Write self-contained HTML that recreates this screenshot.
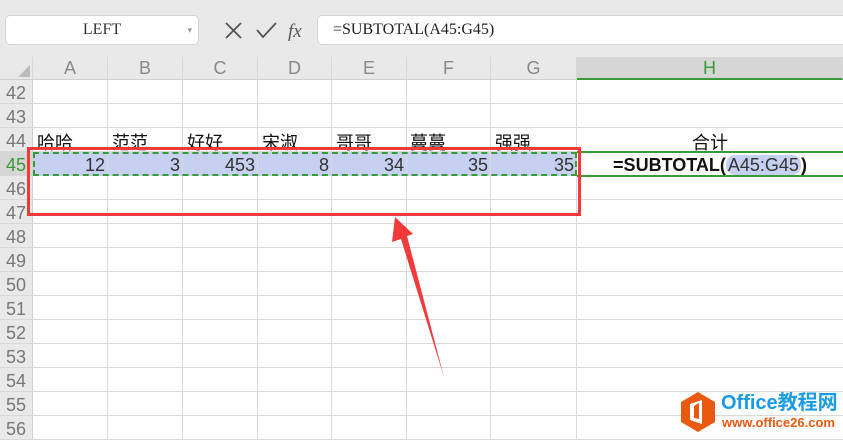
<!DOCTYPE html><html><head><meta charset="utf-8"><style>
*{margin:0;padding:0;box-sizing:border-box}
body{width:843px;height:440px;overflow:hidden;background:#fff;font-family:"Liberation Sans","Noto Sans CJK SC",sans-serif;position:relative}
.a{position:absolute;white-space:nowrap}
.top{left:0;top:0;width:843px;height:57px;background:#e9e9e9}
.nb{left:5px;top:15px;width:194px;height:30px;background:#fff;border:1px solid #d4d4d4;border-radius:5px;font-family:"Liberation Serif",serif;font-size:16px;text-align:center;line-height:28px;color:#333}
.fb{left:317px;top:15px;width:540px;height:30px;background:#fff;border:1px solid #d4d4d4;border-radius:5px;font-family:"Liberation Serif",serif;font-size:16px;line-height:28px;padding-left:15px;color:#222}
.hdr{top:57px;height:23px;background:#e9e9e9;border-bottom:1px solid #cfcfcf;border-right:1px solid #d8d8d8;color:#888;font-size:18px;text-align:center;line-height:23px}
.rn{left:0;width:33px;height:24px;background:#e9e9e9;border-bottom:1px solid #d8d8d8;border-right:1px solid #cfcfcf;color:#777;font-size:18px;text-align:center;line-height:26px}
.vl{top:80px;width:1px;height:360px;background:#dadada}
.hl{left:33px;width:810px;height:1px;background:#dadada}
.t{font-size:18px;color:#111;height:23px;overflow:hidden;line-height:30px}
.n{font-size:18px;color:#333;text-align:right;line-height:26px}
</style></head><body>
<div class="a top"></div>
<div class="a nb">LEFT<span style="position:absolute;right:6px;top:0;font-size:9px;color:#999">▾</span></div>
<svg class="a" style="left:222px;top:18px" width="100" height="26"><path d="M4 5l15 15M19 5L4 20" stroke="#555" stroke-width="1.8" fill="none"/><path d="M35 12l6 7 13-14" stroke="#555" stroke-width="1.8" fill="none"/><text x="66" y="19" font-family="Liberation Serif" font-style="italic" font-size="19" fill="#555">fx</text></svg>
<div class="a fb">=SUBTOTAL(A45:G45)</div>
<div class="a hdr" style="left:0;width:33px"><svg width="33" height="22"><path d="M30 20H18L30 8z" fill="#bbb"/></svg></div>
<div class="a hdr" style="left:33px;width:75px">A</div>
<div class="a hdr" style="left:108px;width:75px">B</div>
<div class="a hdr" style="left:183px;width:75px">C</div>
<div class="a hdr" style="left:258px;width:74px">D</div>
<div class="a hdr" style="left:332px;width:75px">E</div>
<div class="a hdr" style="left:407px;width:84px">F</div>
<div class="a hdr" style="left:491px;width:86px">G</div>
<div class="a hdr" style="left:577px;width:266px;background:#d6d6d6;color:#3a9a3a;border-bottom:2px solid #3a9a3a">H</div>
<div class="a rn" style="top:80px">42</div><div class="a rn" style="top:104px">43</div><div class="a rn" style="top:128px">44</div><div class="a rn" style="top:152px;color:#3a9a3a;background:#d6d6d6">45</div><div class="a rn" style="top:176px">46</div><div class="a rn" style="top:200px">47</div><div class="a rn" style="top:224px">48</div><div class="a rn" style="top:248px">49</div><div class="a rn" style="top:272px">50</div><div class="a rn" style="top:296px">51</div><div class="a rn" style="top:320px">52</div><div class="a rn" style="top:344px">53</div><div class="a rn" style="top:368px">54</div><div class="a rn" style="top:392px">55</div><div class="a rn" style="top:416px">56</div>
<div class="a hl" style="top:103px"></div><div class="a hl" style="top:127px"></div><div class="a hl" style="top:151px"></div><div class="a hl" style="top:175px"></div><div class="a hl" style="top:199px"></div><div class="a hl" style="top:223px"></div><div class="a hl" style="top:247px"></div><div class="a hl" style="top:271px"></div><div class="a hl" style="top:295px"></div><div class="a hl" style="top:319px"></div><div class="a hl" style="top:343px"></div><div class="a hl" style="top:367px"></div><div class="a hl" style="top:391px"></div><div class="a hl" style="top:415px"></div><div class="a hl" style="top:439px"></div>
<div class="a" style="left:33px;top:152px;width:544px;height:24px;background:#c6d0f0"></div>
<div class="a vl" style="left:107px"></div><div class="a vl" style="left:182px"></div><div class="a vl" style="left:257px"></div><div class="a vl" style="left:331px"></div><div class="a vl" style="left:406px"></div><div class="a vl" style="left:490px"></div><div class="a vl" style="left:576px"></div>
<div class="a" style="left:577px;top:151px;width:266px;height:2px;background:#3a9a3a"></div>
<div class="a" style="left:577px;top:175px;width:266px;height:2px;background:#3a9a3a"></div>
<div class="a t" style="left:37px;top:128px">哈哈</div><div class="a t" style="left:112px;top:128px">范范</div><div class="a t" style="left:187px;top:128px">好好</div><div class="a t" style="left:262px;top:128px">宋淑</div><div class="a t" style="left:336px;top:128px">哥哥</div><div class="a t" style="left:410px;top:128px">蔓蔓</div><div class="a t" style="left:495px;top:128px">强强</div>
<div class="a t" style="left:577px;width:266px;text-align:center;top:128px">合计</div>
<div class="a n" style="left:33px;width:72px;top:152px">12</div><div class="a n" style="left:108px;width:72px;top:152px">3</div><div class="a n" style="left:183px;width:72px;top:152px">453</div><div class="a n" style="left:258px;width:71px;top:152px">8</div><div class="a n" style="left:332px;width:72px;top:152px">34</div><div class="a n" style="left:407px;width:81px;top:152px">35</div><div class="a n" style="left:491px;width:83px;top:152px">35</div>
<div class="a" style="left:33px;top:152px;width:544px;height:24px;border:2px dashed #3a9a3a"></div>
<div class="a" style="left:577px;top:153px;width:266px;text-align:center;font-size:18px;line-height:24px;color:#111"><b>=SUBTOTAL(</b><span style="background:#c6d0f0;border-radius:9px;padding:0 2px;color:#333">A45:G45</span><b>)</b></div>
<div class="a" style="left:27px;top:147px;width:554px;height:69px;border:3px solid #f23a3a"></div>
<svg class="a" style="left:0;top:0" width="843" height="440"><path d="M395 217L413 234 407 236 444 377 401 239 392 242z" fill="#f23a3a"/></svg>
<svg class="a" style="left:678px;top:390px" width="40" height="44"><path d="M20 2L37 12V32L20 42 3 32V12z" fill="#e9590f"/><path d="M12 14L24 10V34L12 30z M16 16V28L21 29V13z" fill="#fff" fill-rule="evenodd"/></svg>
<div class="a" style="left:721px;top:392px;font-size:20px;font-weight:bold;color:#1a9be6;line-height:22px">Office教程网</div>
<div class="a" style="left:722px;top:415px;font-size:13px;font-weight:bold;color:#e9590f;line-height:16px">www.office26.com</div>
</body></html>
